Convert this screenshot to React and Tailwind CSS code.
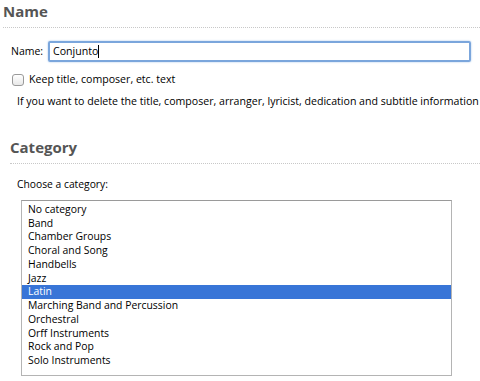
import React from "react";

const items = [
  "No category",
  "Band",
  "Chamber Groups",
  "Choral and Song",
  "Handbells",
  "Jazz",
  "Latin",
  "Marching Band and Percussion",
  "Orchestral",
  "Orff Instruments",
  "Rock and Pop",
  "Solo Instruments",
];

export default function App() {
  return (
    <div
      className="w-[480px] h-[381px] bg-white overflow-hidden text-black"
      style={{ fontFamily: '"Open Sans", "Liberation Sans", Arial, sans-serif' }}
    >
      <div className="pt-[1px]">
        <h2 className="pl-[3px] text-[15px] leading-[20px] font-bold text-[#555]">Name</h2>
        <div className="mt-[6px] ml-[3px] border-t border-dotted border-[#c8c8c8]" />
        <div className="flex items-center mt-[13px] pl-[11px]">
          <span className="text-[10.5px] w-[37px]">Name:</span>
          <div className="w-[423px] h-[21px] border-2 border-[#7ba6dc] rounded-[2px] shadow-[0_0_2px_#9bbfe8] flex items-center pl-[3px] text-[10.6px]">
            Conjunto<span className="inline-block w-px h-[13px] bg-black" />
          </div>
        </div>
        <div className="flex items-center mt-[10px] pl-[12px]">
          <div className="w-[12px] h-[12px] border border-[#9a9a9a] rounded-[3px] bg-gradient-to-b from-white to-[#e8e8e8]" />
          <span className="ml-[5px] text-[10.6px]">Keep title, composer, etc. text</span>
        </div>
        <p className="mt-[6px] pl-[17px] text-[10.6px] leading-[14px] whitespace-nowrap">
          If you want to delete the title, composer, arranger, lyricist, dedication and subtitle information
        </p>
        <h2 className="mt-[29px] pl-[10px] text-[15px] leading-[20px] font-bold text-[#555]">Category</h2>
        <div className="mt-[6px] ml-[10px] border-t border-dotted border-[#c8c8c8]" />
        <p className="mt-[13px] pl-[17px] text-[10.3px] leading-[14px]">Choose a category:</p>
        <div className="mt-[9px] ml-[21px] w-[431px] h-[176px] border border-[#b4b4b4] border-t-[#9a9a9a] pt-[2px]">
          {items.map((it) => (
            <div
              key={it}
              className={
                "h-[13.75px] leading-[13.75px] pl-[6px] text-[10.4px] " +
                (it === "Latin" ? "bg-[#3875d7] text-white" : "")
              }
            >
              {it}
            </div>
          ))}
        </div>
      </div>
    </div>
  );
}
